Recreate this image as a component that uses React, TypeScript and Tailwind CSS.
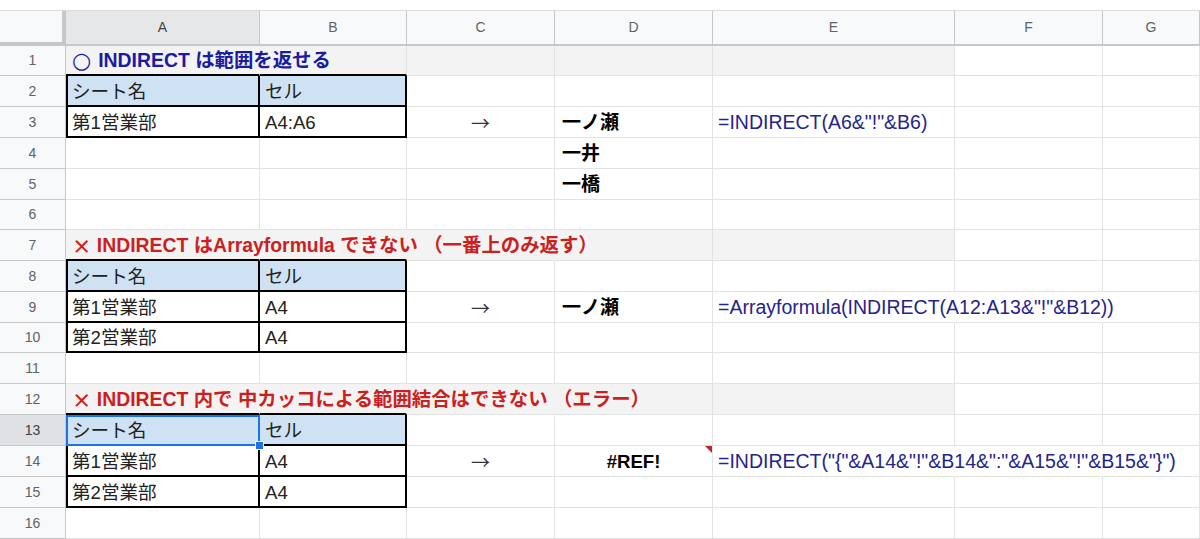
import React from 'react'
import { twMerge } from 'tailwind-merge'

// column widths (right grid line included)
const W: Record<string, string> = {
  A: 'w-[194px]',
  B: 'w-[147px]',
  C: 'w-[148px]',
  D: 'w-[158px]',
  E: 'w-[242px]',
  F: 'w-[148px]',
  G: 'flex-1 min-w-0',
}

const COLS = ['A', 'B', 'C', 'D', 'E', 'F', 'G']

type CellProps = { col: string; className?: string; children?: React.ReactNode }

const Cell = ({ col, className, children }: CellProps) => (
  <div
    className={twMerge(
      'h-full shrink-0 flex items-center pt-[2px] px-[5px] border-r border-b border-[#e2e3e3] whitespace-nowrap text-[18.6px] text-[#222]',
      W[col],
      className
    )}
  >
    {children}
  </div>
)

type RowProps = { n: number; h: string; selected?: boolean; children: React.ReactNode }

const Row = ({ n, h, selected, children }: RowProps) => (
  <div className={twMerge('flex w-full', h)}>
    <div
      className={twMerge(
        'w-[66px] shrink-0 h-full flex items-center justify-center bg-[#f8f9fa] border-r border-b border-[#c7c7c7] text-[14px] text-[#5f6368]',
        selected && 'bg-[#dfe1e4] text-[#3c4043]'
      )}
    >
      {n}
    </div>
    {children}
  </div>
)

// outlined A:B block
const tbl = 'border-r-2 border-b-2 border-black'
const tblA = 'border-l-2 border-r-2 border-b-2 border-black pl-[4px]'
const head = 'bg-[#cfe2f3]'
const band = 'bg-[#f3f3f3]'
const title = 'relative z-10 border-r-transparent border-b-2 border-b-black pl-[6px] font-bold text-[19.4px]'
const formula = 'text-[19.5px] text-[#24248c]'
const name = 'font-bold text-black text-[19px] pl-[7px]'
const arrow = "justify-center font-['Noto_Sans_CJK_JP'] text-[19px] text-[#333]"

const Empty = ({ from }: { from: string }) => (
  <>
    {COLS.slice(COLS.indexOf(from)).map((c) => (
      <Cell key={c} col={c} />
    ))}
  </>
)

export default function App() {
  return (
    <div className="w-[1200px] h-[539px] overflow-hidden bg-white font-['Liberation_Sans','Noto_Sans_CJK_JP',sans-serif]">
      <div className="h-[11px] border-b border-[#dadce0]" />

      {/* column headers */}
      <div className="flex h-[35px]">
        <div className="w-[66px] shrink-0 bg-[#f8f9fa] border-r-4 border-b-4 border-[#c7c7c7]" />
        {COLS.map((c) => (
          <div
            key={c}
            className={twMerge(
              'h-full shrink-0 flex items-center justify-center bg-[#f8f9fa] border-r border-b-2 border-[#c7c7c7] text-[14px] text-[#5f6368]',
              W[c],
              c === 'A' && 'bg-[#e6e7e9] text-[#444]'
            )}
          >
            {c}
          </div>
        ))}
      </div>

      <Row n={1} h="h-[30px]">
        <Cell col="A" className={twMerge(band, title, 'text-[#1c1ca0]')}>
          <span className="font-['DejaVu_Sans'] text-[22px] leading-none mr-[7px]">○</span>INDIRECT は範囲を返せる
        </Cell>
        <Cell col="B" className={twMerge(band, 'border-b-2 border-b-black')} />
        <Cell col="C" className={band} />
        <Cell col="D" className={band} />
        <Cell col="E" className={band} />
        <Empty from="F" />
      </Row>

      <Row n={2} h="h-[31px]">
        <Cell col="A" className={twMerge(head, tblA)}>シート名</Cell>
        <Cell col="B" className={twMerge(head, tbl)}>セル</Cell>
        <Empty from="C" />
      </Row>

      <Row n={3} h="h-[31px]">
        <Cell col="A" className={tblA}>第1営業部</Cell>
        <Cell col="B" className={tbl}>A4:A6</Cell>
        <Cell col="C" className={arrow}>→</Cell>
        <Cell col="D" className={name}>一ノ瀬</Cell>
        <Cell col="E" className={formula}>{'=INDIRECT(A6&"!"&B6)'}</Cell>
        <Empty from="F" />
      </Row>

      <Row n={4} h="h-[31px]">
        <Cell col="A" />
        <Cell col="B" />
        <Cell col="C" />
        <Cell col="D" className={name}>一井</Cell>
        <Empty from="E" />
      </Row>

      <Row n={5} h="h-[31px]">
        <Cell col="A" />
        <Cell col="B" />
        <Cell col="C" />
        <Cell col="D" className={name}>一橋</Cell>
        <Empty from="E" />
      </Row>

      <Row n={6} h="h-[30px]">
        <Empty from="A" />
      </Row>

      <Row n={7} h="h-[31px]">
        <Cell col="A" className={twMerge(band, title, 'text-[#cc1f1f]')}>
          <span className="font-['Noto_Sans_CJK_JP']">×</span>&nbsp;INDIRECT はArrayformula できない （一番上のみ返す）
        </Cell>
        <Cell col="B" className={twMerge(band, 'border-r-transparent border-b-2 border-b-black')} />
        <Cell col="C" className={twMerge(band, 'border-r-transparent')} />
        <Cell col="D" className={band} />
        <Cell col="E" className={band} />
        <Empty from="F" />
      </Row>

      <Row n={8} h="h-[31px]">
        <Cell col="A" className={twMerge(head, tblA)}>シート名</Cell>
        <Cell col="B" className={twMerge(head, tbl)}>セル</Cell>
        <Empty from="C" />
      </Row>

      <Row n={9} h="h-[31px]">
        <Cell col="A" className={tblA}>第1営業部</Cell>
        <Cell col="B" className={tbl}>A4</Cell>
        <Cell col="C" className={arrow}>→</Cell>
        <Cell col="D" className={name}>一ノ瀬</Cell>
        <Cell col="E" className={twMerge(formula, 'relative z-10 border-r-transparent')}>
          {'=Arrayformula(INDIRECT(A12:A13&"!"&B12))'}
        </Cell>
        <Cell col="F" className="border-r-transparent" />
        <Cell col="G" />
      </Row>

      <Row n={10} h="h-[30px]">
        <Cell col="A" className={tblA}>第2営業部</Cell>
        <Cell col="B" className={tbl}>A4</Cell>
        <Empty from="C" />
      </Row>

      <Row n={11} h="h-[31px]">
        <Empty from="A" />
      </Row>

      <Row n={12} h="h-[31px]">
        <Cell col="A" className={twMerge(band, title, 'text-[#cc1f1f]')}>
          <span className="font-['Noto_Sans_CJK_JP']">×</span>&nbsp;INDIRECT 内で 中カッコによる範囲結合はできない （エラー）
        </Cell>
        <Cell col="B" className={twMerge(band, 'border-r-transparent border-b-2 border-b-black')} />
        <Cell col="C" className={twMerge(band, 'border-r-transparent')} />
        <Cell col="D" className={band} />
        <Cell col="E" className={band} />
        <Empty from="F" />
      </Row>

      <Row n={13} h="h-[31px]" selected>
        <Cell col="A" className={twMerge(head, tblA, 'relative')}>
          シート名
          {/* active cell outline + fill handle */}
          <div className="absolute -left-[2px] -right-[2px] top-0 -bottom-[2px] border-2 border-[#1a73e8]" />
          <div className="absolute -right-[6px] -bottom-[6px] z-20 w-[9px] h-[9px] bg-[#1a73e8] border border-white" />
        </Cell>
        <Cell col="B" className={twMerge(head, tbl)}>セル</Cell>
        <Empty from="C" />
      </Row>

      <Row n={14} h="h-[31px]">
        <Cell col="A" className={tblA}>第1営業部</Cell>
        <Cell col="B" className={tbl}>A4</Cell>
        <Cell col="C" className={arrow}>→</Cell>
        <Cell col="D" className="relative justify-center font-bold text-black">
          #REF!
          <div className="absolute top-0 right-0 w-0 h-0 border-t-[7px] border-l-[7px] border-t-[#c5221f] border-l-transparent" />
        </Cell>
        <Cell col="E" className={twMerge(formula, 'relative z-10 border-r-transparent')}>
          {'=INDIRECT("{"&A14&"!"&B14&":"&A15&"!"&B15&"}")'}
        </Cell>
        <Cell col="F" className="border-r-transparent" />
        <Cell col="G" />
      </Row>

      <Row n={15} h="h-[31px]">
        <Cell col="A" className={tblA}>第2営業部</Cell>
        <Cell col="B" className={tbl}>A4</Cell>
        <Empty from="C" />
      </Row>

      <Row n={16} h="h-[31px]">
        <Empty from="A" />
      </Row>
    </div>
  )
}
